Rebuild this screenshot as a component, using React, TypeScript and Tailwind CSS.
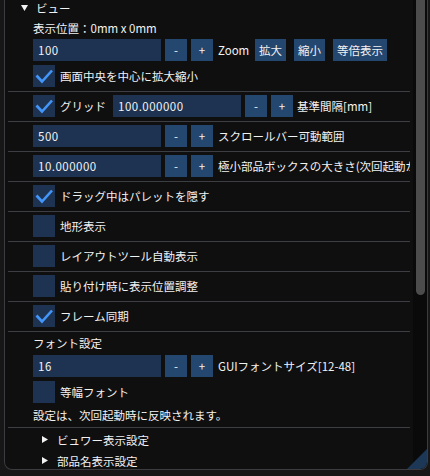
const Sep = () => <div className="h-px bg-[#3d3d44] mt-[4px] mb-[3px] shrink-0" />;

const Check = ({ on }: { on?: boolean }) => (
    <div className="w-[22px] h-[22px] bg-[#1e3251] shrink-0">
        {on && (
            <svg width="22" height="22" viewBox="0 0 22 22">
                <path d="M3.5 10.5 L9 16.5 L19 5.5" fill="none" stroke="#4296fa" strokeWidth="2.6" />
            </svg>
        )}
    </div>
);

const Input = ({ value, w = "w-[128px]" }: { value: string, w?: string }) => (
    <div className={`${w} h-[22px] bg-[#1e3251] flex items-center pl-[5px] tracking-[0.5px] shrink-0`}>
        {value}
    </div>
);

const Btn = ({ label, w = "w-[22px]" }: { label: string, w?: string }) => (
    <div className={`${w} h-[22px] bg-[#24476f] flex items-center justify-center shrink-0`}>
        {label}
    </div>
);

const Stepper = ({ value, w }: { value: string, w?: string }) => (
    <div className="flex items-center gap-[4px] shrink-0">
        <Input value={value} w={w} />
        <Btn label="-" />
        <Btn label="+" />
    </div>
);

const Row = ({ children, className = "" }: { children: React.ReactNode, className?: string }) => (
    <div className={`flex items-center h-[22px] pl-[25px] whitespace-nowrap shrink-0 ${className}`}>
        {children}
    </div>
);

const CheckRow = ({ on, label }: { on?: boolean, label: string }) => (
    <Row>
        <Check on={on} />
        <span className="ml-[5px]">{label}</span>
    </Row>
);

const TreeChild = ({ label, className = "" }: { label: string, className?: string }) => (
    <div className={`flex items-center h-[17px] whitespace-nowrap shrink-0 ${className}`}>
        <svg width="6" height="7" viewBox="0 0 6 7" className="ml-[34px]">
            <path d="M0 0 L6 3.5 L0 7 Z" fill="#f2f2f2" />
        </svg>
        <span className="ml-[9px]">{label}</span>
    </div>
);

export default function App() {
    return (
        <div className="w-[430px] h-[476px] bg-[#171717] overflow-hidden font-['Noto_Sans_CJK_JP',sans-serif] text-[11.5px] leading-[16px] text-[#f2f2f2]">
            <div className="relative ml-[4px] w-[424px] h-[470px] flex bg-[#0f0f0f] border-x border-b border-[#3b3b40] rounded-b-[8px] overflow-hidden">
                {/* content */}
                <div className="ml-[3px] w-[402px] flex flex-col overflow-hidden">
                    <div className="flex items-center h-[16px] shrink-0">
                        <svg width="7" height="6" viewBox="0 0 7 6" className="ml-[13px]">
                            <path d="M0 0 L7 0 L3.5 6 Z" fill="#f2f2f2" />
                        </svg>
                        <span className="ml-[8px]">ビュー</span>
                    </div>
                    <div className="h-[16px] mt-[4px] pl-[25px] flex items-center shrink-0">表示位置：0mm x 0mm</div>

                    <Row className="mt-[3px]">
                        <Stepper value="100" />
                        <span className="ml-[5px] w-[33px]">Zoom</span>
                        <div className="flex gap-[8px] ml-[4px]">
                            <Btn label="拡大" w="w-[31px]" />
                            <Btn label="縮小" w="w-[31px]" />
                            <Btn label="等倍表示" w="w-[54px]" />
                        </div>
                    </Row>
                    <div className="mt-[4px]">
                        <CheckRow on label="画面中央を中心に拡大縮小" />
                    </div>
                    <Sep />

                    <Row>
                        <Check on />
                        <span className="ml-[5px] w-[53px]">グリッド</span>
                        <Stepper value="100.000000" />
                        <span className="ml-[4px]">基準間隔[mm]</span>
                    </Row>
                    <Sep />

                    <Row>
                        <Stepper value="500" />
                        <span className="ml-[5px]">スクロールバー可動範囲</span>
                    </Row>
                    <Sep />

                    <Row>
                        <Stepper value="10.000000" />
                        <span className="ml-[5px]">極小部品ボックスの大きさ(次回起動から有効)</span>
                    </Row>
                    <Sep />

                    <CheckRow on label="ドラッグ中はパレットを隠す" />
                    <Sep />
                    <CheckRow label="地形表示" />
                    <Sep />
                    <CheckRow label="レイアウトツール自動表示" />
                    <Sep />
                    <CheckRow label="貼り付け時に表示位置調整" />
                    <Sep />
                    <CheckRow on label="フレーム同期" />
                    <Sep />

                    <div className="h-[16px] pl-[25px] flex items-center shrink-0">フォント設定</div>
                    <Row className="mt-[4px]">
                        <Stepper value="16" />
                        <span className="ml-[5px]">GUIフォントサイズ[12-48]</span>
                    </Row>
                    <div className="mt-[4px]">
                        <CheckRow label="等幅フォント" />
                    </div>
                    <div className="h-[16px] mt-[4px] pl-[25px] flex items-center whitespace-nowrap shrink-0">設定は、次回起動時に反映されます。</div>
                    <Sep />

                    <TreeChild label="ビュワー表示設定" />
                    <TreeChild label="部品名表示設定" className="mt-[4px]" />
                </div>

                {/* scrollbar */}
                <div className="ml-[3px] w-[14px] bg-[#0a0a0a] pl-[3px] pr-[2px]">
                    <div className="h-[295px] bg-[#4c4c4c] rounded-b-[5px]" />
                </div>

                {/* resize grip */}
                <svg width="20" height="20" viewBox="0 0 20 20" className="absolute right-0 bottom-0">
                    <path d="M20 0 L20 20 L0 20 Z" fill="#1d3756" />
                </svg>
            </div>
        </div>
    );
}
